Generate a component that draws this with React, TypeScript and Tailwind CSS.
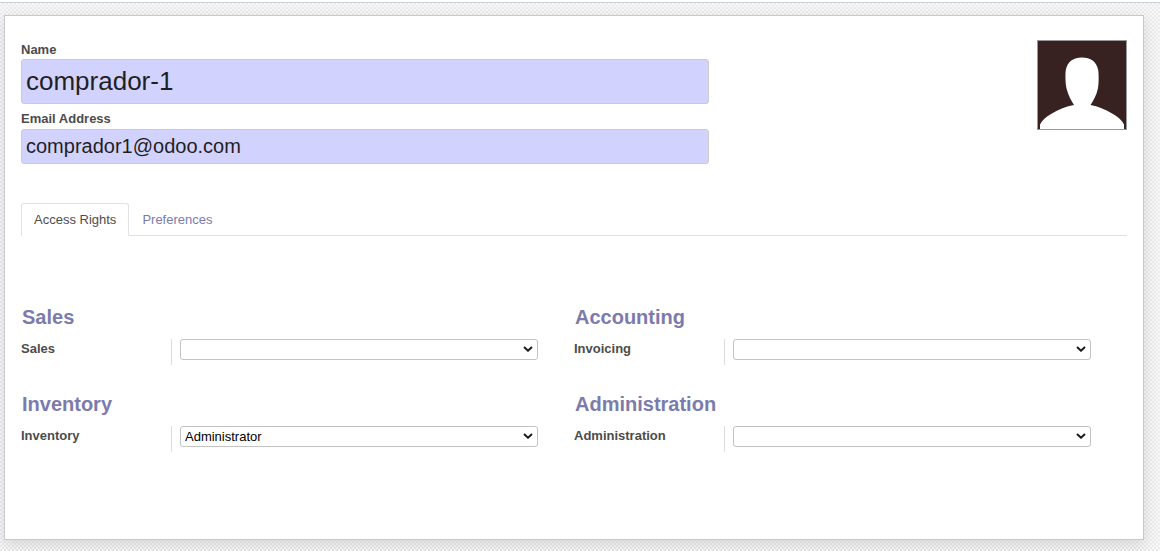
import React, { useState } from "react";

type AccessGroup = { title: string; label: string; id: string; value: string; options: string[] };

const groups: AccessGroup[] = [
  { title: "Sales", label: "Sales", id: "sales", value: "", options: ["", "Administrator"] },
  { title: "Accounting", label: "Invoicing", id: "invoicing", value: "", options: ["", "Billing"] },
  { title: "Inventory", label: "Inventory", id: "inventory", value: "Administrator", options: ["", "User", "Administrator"] },
  { title: "Administration", label: "Administration", id: "administration", value: "", options: ["", "Settings"] },
];

function Avatar() {
  return (
    <svg viewBox="0 0 90 90" className="size-[90px] shrink-0" role="img" aria-label="User avatar">
      <rect x="0.5" y="0.5" width="89" height="89" fill="#382121" stroke="#999999" />
      <path
        fill="#ffffff"
        d="M3 89V84.500C5 80 9 77 14 74C22 69.500 29 66 37 65C34.500 61 31.500 56 29.800 49.500C28.300 44 28.200 34 28.800 30C30.500 21.500 36.500 17.500 45 17.500C53.500 17.500 59.500 21.500 61.200 30C61.800 34 62 44 60.800 49C59.500 55 56.500 60.500 53.500 65C61 66 68 69.500 76 74C81 77 85 80 87 84.500V89Z"
      />
    </svg>
  );
}

function AccessSection({ group }: { group: AccessGroup }) {
  const [value, setValue] = useState(group.value);
  return (
    <section className="flex flex-col gap-[7px]">
      <h2 className="pl-px text-[20px] leading-[30px] font-bold text-[#7c7bad]">{group.title}</h2>
      <div className="flex h-[26px] pr-9">
        <label htmlFor={group.id} className="w-[150px] shrink-0 text-[13px] leading-5 font-bold text-[#4c4c4c]">
          {group.label}
        </label>
        <div className="flex-1 border-l border-[#dddddd] pl-2">
          <div className="relative">
            <select
              id={group.id}
              value={value}
              onChange={(e) => setValue(e.target.value)}
              className="block h-[21px] w-full appearance-none rounded-[3px] border border-[#c3c3c3] bg-white px-1 text-[13px] leading-[19px] text-black"
            >
              {group.options.map((o) => (
                <option key={o}>{o}</option>
              ))}
            </select>
            <svg viewBox="0 0 10 6" className="pointer-events-none absolute top-[7px] right-[5px] h-[6px] w-[10px]" aria-hidden="true">
              <path d="M1 1L5 4.700L9 1" fill="none" stroke="#1a1a1a" strokeWidth="2" />
            </svg>
          </div>
        </div>
      </div>
    </section>
  );
}

export default function App() {
  const [name, setName] = useState("comprador-1");
  const [email, setEmail] = useState("comprador1@odoo.com");
  return (
    <div className="min-h-screen bg-white pt-0.5 font-['Liberation_Sans',Arial,sans-serif] text-[13px] text-[#4c4c4c]">
      <main className="min-h-[549px] border-t border-[#cacfd6] bg-[conic-gradient(#ebebeb_25%,#f9f9f9_0_50%,#ebebeb_0_75%,#f9f9f9_0)] bg-[size:4px_4px] pt-3 pr-4 pb-[11px] pl-1">
        <div className="border border-[#c8c8d3] bg-white px-4 pt-6 pb-[87px] shadow-[0_5px_15px_rgba(0,0,0,0.12)]">
          <header className="flex items-start justify-between">
            <div className="flex w-[62.2%] flex-col">
              <label htmlFor="name" className="leading-[19px] font-bold">Name</label>
              <input
                id="name"
                value={name}
                onChange={(e) => setName(e.target.value)}
                className="h-[45px] w-full rounded-[3px] border border-[#cccccc] bg-[#d2d2ff] px-1 text-[26px] text-[#1f1f1f]"
              />
              <label htmlFor="email" className="mt-[5px] leading-5 font-bold">Email Address</label>
              <input
                id="email"
                type="email"
                value={email}
                onChange={(e) => setEmail(e.target.value)}
                className="h-[35px] w-full rounded-[3px] border border-[#cccccc] bg-[#d2d2ff] px-1 text-[20px] text-[#1f1f1f]"
              />
            </div>
            <Avatar />
          </header>
          <div role="tablist" className="mt-[39px] flex h-[33px] border-b border-[#dee2e6]">
            <button role="tab" aria-selected="true" className="-mb-px rounded-t-[3px] border border-[#dee2e6] border-b-white bg-white px-3 text-[#4c4c4c]">
              Access Rights
            </button>
            <button role="tab" aria-selected="false" className="-mb-px border border-transparent px-3 text-[#7c7bad]">
              Preferences
            </button>
          </div>
          <div role="tabpanel" className="mt-[66px] grid grid-cols-2 gap-y-6">
            {groups.map((g) => (
              <AccessSection key={g.id} group={g} />
            ))}
          </div>
        </div>
      </main>
    </div>
  );
}
